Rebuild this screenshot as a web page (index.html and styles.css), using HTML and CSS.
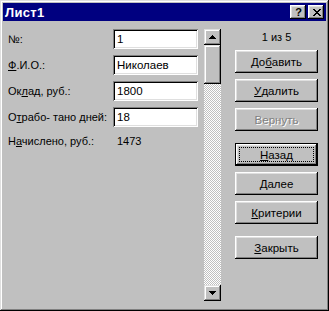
FILE: index.html
```html
<!DOCTYPE html>
<html>
<head>
    <title>Лист1</title>
    <meta http-equiv="Content-Type" content="text/html; charset=utf-8" />
    <link rel="stylesheet" href="styles.css">
</head>
<body>
<div class="window">
    <div class="titlebar">
        <div class="title">Лист1</div>
        <div class="title-buttons">
            <div class="title-btn help">?</div>
            <div class="title-btn close">
                <svg width="8" height="7" viewBox="0 0 8 7">
                    <path d="M0 0h2v1h1v1h2v-1h1v-1h2v1h-1v1h-1v1h-1v1h1v1h1v1h1v1h-2v-1h-1v-1h-2v1h-1v1h-2v-1h1v-1h1v-1h1v-1h-1v-1h-1v-1h-1z" fill="#000"/>
                </svg>
            </div>
        </div>
    </div>

    <div class="client">
        <!-- поля записи -->
        <div class="fields">
            <div class="row">
                <div class="label">№:</div>
                <div class="field">1</div>
            </div>
            <div class="row">
                <div class="label"><u>Ф</u>.И.О.:</div>
                <div class="field">Николаев</div>
            </div>
            <div class="row">
                <div class="label">Ок<u>л</u>ад, руб.:</div>
                <div class="field">1800</div>
            </div>
            <div class="row">
                <div class="label">О<u>т</u>рабо- тано дней:</div>
                <div class="field">18</div>
            </div>
            <div class="row calc">
                <div class="label">Н<u>а</u>числено, руб.:</div>
                <div class="value">1473</div>
            </div>
        </div>

        <!-- полоса прокрутки -->
        <div class="scrollbar">
            <div class="scroll-btn">
                <svg width="7" height="4" viewBox="0 0 7 4"><path d="M3 0h1v1h1v1h1v1h1v1h-7v-1h1v-1h1v-1h1z" fill="#000"/></svg>
            </div>
            <div class="scroll-thumb"></div>
            <div class="scroll-track"></div>
            <div class="scroll-btn">
                <svg width="7" height="4" viewBox="0 0 7 4"><path d="M0 0h7v1h-1v1h-1v1h-1v1h-1v-1h-1v-1h-1v-1h-1z" fill="#000"/></svg>
            </div>
        </div>

        <!-- кнопки -->
        <div class="buttons">
            <div class="counter">1 из 5</div>
            <div class="btn">До<u>б</u>авить</div>
            <div class="btn"><u>У</u>далить</div>
            <div class="btn disabled">Вернуть</div>
            <div class="btn default group"><span class="focus"><u>Н</u>азад</span></div>
            <div class="btn"><u>Д</u>алее</div>
            <div class="btn"><u>К</u>ритерии</div>
            <div class="btn group"><u>З</u>акрыть</div>
        </div>
    </div>
</div>
</body>
</html>
```

FILE: styles.css
```css
html, body {margin: 0; padding: 0; background: #c0c0c0;}
body{
    font-family: "Liberation Sans", Arial, sans-serif;
    font-size: 11px;
    color: #000;
}
.window{
    width: 329px;
    height: 311px;
    box-sizing: border-box;
    padding: 3px;
    background: #c0c0c0;
    display: flex;
    flex-direction: column;
    box-shadow: inset -1px -1px #000, inset 1px 1px #dfdfdf, inset -2px -2px #808080, inset 2px 2px #fff;
}
.titlebar{
    display: flex;
    align-items: center;
    justify-content: space-between;
    height: 18px;
    background: #000080;
    padding: 0 2px;
}
.title{
    color: white;
    font-weight: bold;
    font-size: 13px;
    letter-spacing: 0.3px;
}
.title-buttons{
    display: flex;
    gap: 2px;
}
.title-btn{
    width: 16px;
    height: 14px;
    box-sizing: border-box;
    background: #c0c0c0;
    display: flex;
    align-items: center;
    justify-content: center;
    box-shadow: inset -1px -1px #000, inset 1px 1px #fff, inset -2px -2px #808080, inset 2px 2px #dfdfdf;
}
.help{
    font-weight: bold;
    font-size: 11px;
    line-height: 14px;
    padding-left: 1px;
}
.close svg{
    margin-left: 1px;
}
.client{
    flex: 1;
    display: flex;
    padding: 8px 0 0 5px;
}
.fields{
    width: 190px;
    display: flex;
    flex-direction: column;
}
.row{
    display: flex;
    align-items: center;
    height: 20px;
    margin-bottom: 6px;
}
.row.calc{
    margin-top: -2px;
}
.label{
    width: 105px;
    white-space: nowrap;
}
.field{
    width: 85px;
    height: 20px;
    box-sizing: border-box;
    background: white;
    padding: 0 4px;
    line-height: 20px;
    font-size: 11.5px;
    box-shadow: inset 1px 1px #808080, inset -1px -1px #fff, inset 2px 2px #000, inset -2px -2px #dfdfdf;
}
.value{
    padding-left: 4px;
}
.scrollbar{
    width: 17px;
    height: 272px;
    margin-left: 6px;
    display: flex;
    flex-direction: column;
}
.scroll-btn, .scroll-thumb{
    background: #c0c0c0;
    box-shadow: inset -1px -1px #000, inset 1px 1px #dfdfdf, inset -2px -2px #808080, inset 2px 2px #fff;
}
.scroll-btn{
    height: 16px;
    display: flex;
    align-items: center;
    justify-content: center;
}
.scroll-thumb{
    height: 39px;
}
.scroll-track{
    flex: 1;
    background: repeating-conic-gradient(#fff 0 25%, #c0c0c0 0 50%) 0 0 / 2px 2px;
}
.buttons{
    width: 83px;
    margin-left: 14px;
    display: flex;
    flex-direction: column;
}
.counter{
    height: 16px;
    line-height: 16px;
    text-align: center;
    margin-bottom: 5px;
}
.btn{
    height: 23px;
    box-sizing: border-box;
    margin-bottom: 6px;
    display: flex;
    align-items: center;
    justify-content: center;
    font-size: 11.5px;
    background: #c0c0c0;
    box-shadow: inset -1px -1px #000, inset 1px 1px #fff, inset -2px -2px #808080, inset 2px 2px #dfdfdf;
}
.btn.group{
    margin-top: 6px;
}
.btn.disabled{
    color: #808080;
    text-shadow: 1px 1px #fff;
}
.btn.default{
    border: 1px solid #000;
    padding: 3px;
}
.focus{
    flex: 1;
    align-self: stretch;
    display: flex;
    align-items: center;
    justify-content: center;
    border: 1px dotted #000;
}
```
